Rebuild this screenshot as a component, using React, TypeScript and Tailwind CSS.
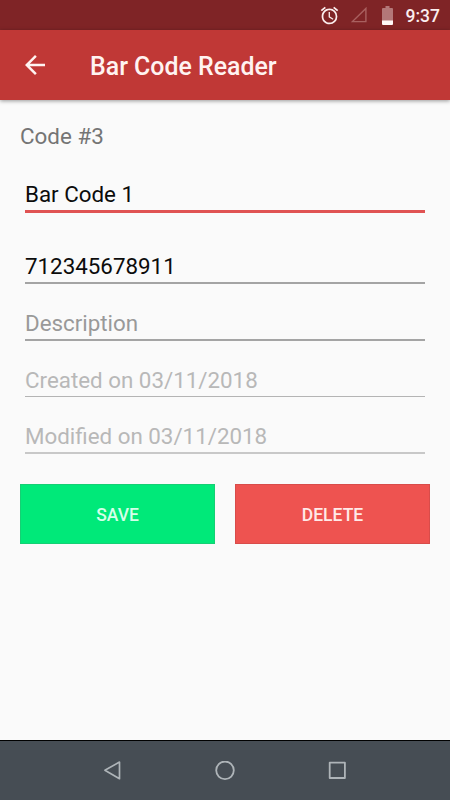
const fields = [
  { value: 'Bar Code 1', box: 'h-[53px]', text: 'text-[#0c0c0c]', line: 'h-[3px] bg-[#e05353]' },
  { value: '712345678911', box: 'mt-[14px] h-[57px]', text: 'text-[#0c0c0c]', line: 'h-[2px] bg-[#a4a4a4]' },
  { value: 'Description', box: 'h-[57px]', text: 'text-[#999999]', line: 'h-[2px] bg-[#a4a4a4]' },
  { value: 'Created on 03/11/2018', box: 'h-[56px]', text: 'text-[#b8b8b8]', line: 'h-px bg-[#b4b4b4]' },
  { value: 'Modified on 03/11/2018', box: 'h-[57px]', text: 'text-[#b8b8b8]', line: 'h-[2px] bg-[#c8c8c8]' },
];

function StatusBar() {
  return (
    <div className="flex h-[30px] shrink-0 items-center justify-end bg-[#7f2426] pr-[10px] text-[#fbeeee]">
      <svg className="mr-[11px] size-[21px]" viewBox="0 0 24 24" fill="currentColor">
        <path d="M22 5.72l-4.6-3.86-1.29 1.53 4.6 3.86L22 5.72zM7.88 3.39L6.6 1.86 2 5.71l1.29 1.53 4.59-3.85zM12.5 8H11v6l4.75 2.85.75-1.23-4-2.37V8zM12 4c-4.97 0-9 4.03-9 9s4.02 9 9 9a9 9 0 0 0 0-18zm0 16c-3.87 0-7-3.13-7-7s3.13-7 7-7 7 3.13 7 7-3.13 7-7 7z" />
      </svg>
      <svg className="mr-[15px] h-[16px] w-[16px]" viewBox="0 0 16 16" fill="none" stroke="#a9605f" strokeWidth="1.4">
        <path d="M1.4 14.6H14.9V1.4Z" />
      </svg>
      <svg className="mr-[13px] h-[19px] w-[11px]" viewBox="0 0 11 19">
        <path d="M3.5 0H7.5V2H10Q11 2 11 3V15H0V3Q0 2 1 2H3.5Z" fill="#b37778" />
        <path d="M0 14.5H11V18Q11 19 10 19H1Q0 19 0 18Z" fill="#fff7f7" />
      </svg>
      <span className="pt-[3px] text-[17.5px] font-medium leading-none">9:37</span>
    </div>
  );
}

export default function App() {
  return (
    <div className="flex h-[800px] w-[450px] flex-col overflow-hidden bg-[#fafafa] font-['Roboto',sans-serif]">
      <StatusBar />
      <header className="z-10 flex h-[70px] shrink-0 items-center bg-[#c03836] pl-[20px] text-[#fff3f1] shadow-[0_1px_4px_rgba(0,0,0,0.4)]">
        <svg className="size-[30px]" viewBox="0 0 24 24" fill="currentColor">
          <path d="M20 11H7.83l5.59-5.59L12 4l-8 8 8 8 1.41-1.41L7.83 13H20v-2z" />
        </svg>
        <h1 className="ml-[40px] pt-[3px] text-[24.9px] font-medium leading-[30px]">Bar Code Reader</h1>
      </header>
      <main className="flex flex-1 flex-col px-[20px] pt-[20px]">
        <p className="h-[40px] text-[22.4px] leading-[33px] text-[#757575]">Code #3</p>
        <div className="flex flex-col px-[5px]">
          {fields.map((f) => (
            <div key={f.value} className={`flex flex-col justify-end ${f.box}`}>
              <span className={`mb-[2px] text-[22.35px] leading-[28px] ${f.text}`}>{f.value}</span>
              <div className={f.line} />
            </div>
          ))}
        </div>
        <div className="mt-[30px] flex gap-[20px] text-[17.5px] font-medium">
          <button className="h-[60px] flex-1 border border-[#16cf74] bg-[#00e979] pt-[2px] text-[#d5ffe9]">SAVE</button>
          <button className="h-[60px] flex-1 border border-[#d84c4a] bg-[#ee5350] pt-[2px] text-[#ffe9e8]">DELETE</button>
        </div>
      </main>
      <nav className="flex h-[60px] shrink-0 items-center justify-center gap-[92px] border-t border-black bg-[#464d54] text-[#aeb4b8]">
        <svg className="size-5" viewBox="0 0 20 20" fill="none" stroke="currentColor" strokeWidth="1.7" strokeLinejoin="round">
          <path d="M1.9 9.3L16.5 1.1V17.7Z" />
        </svg>
        <svg className="size-5" viewBox="0 0 20 20" fill="none" stroke="currentColor" strokeWidth="1.8">
          <circle cx="10" cy="9.3" r="8.8" />
        </svg>
        <svg className="size-5" viewBox="0 0 20 20" fill="none" stroke="currentColor" strokeWidth="1.8" strokeLinejoin="round">
          <rect x="2.7" y="1.6" width="15.2" height="15.4" />
        </svg>
      </nav>
    </div>
  );
}
